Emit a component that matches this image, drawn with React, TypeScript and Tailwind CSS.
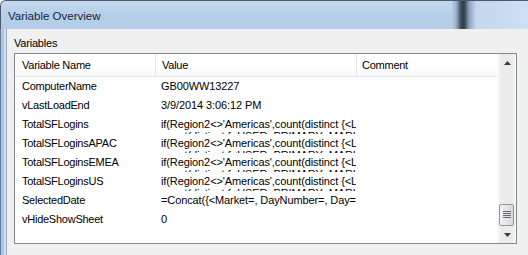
import React from "react";

type Row = { name: string; lines: string[] };

const LONG1 = "if(Region2<>'Americas',count(distinct {<LOGIN_DATE={'>=$(vStart)'}>} USER_ID))";
const LONG2 = "count(distinct {<USER_PRIMARY_MARKET={'$(vRegion)'}>} USER_ID))";

const rows: Row[] = [
  { name: "ComputerName", lines: ["GB00WW13227"] },
  { name: "vLastLoadEnd", lines: ["3/9/2014 3:06:12 PM"] },
  { name: "TotalSFLogins", lines: [LONG1, LONG2] },
  { name: "TotalSFLoginsAPAC", lines: [LONG1, LONG2] },
  { name: "TotalSFLoginsEMEA", lines: [LONG1, LONG2] },
  { name: "TotalSFLoginsUS", lines: [LONG1, LONG2] },
  { name: "SelectedDate", lines: ["=Concat({<Market=, DayNumber=, Day=, Month=>} Date)"] },
  { name: "vHideShowSheet", lines: ["0"] },
];

function Grip() {
  return (
    <svg width="8" height="8" viewBox="0 0 8 8">
      <rect x="0" y="0" width="8" height="1" fill="#5e6a78" />
      <rect x="0" y="2" width="8" height="1" fill="#5e6a78" />
      <rect x="0" y="4" width="8" height="1" fill="#5e6a78" />
      <rect x="0" y="6" width="8" height="1" fill="#5e6a78" />
    </svg>
  );
}

export default function App() {
  return (
    <div className="w-[528px] h-[255px] overflow-hidden bg-[#f0f0f0] flex flex-col font-['Liberation_Sans',Arial,sans-serif] text-black">
      {/* Title bar */}
      <div className="h-[29px] shrink-0 flex rounded-tl-[6px] border-t border-l border-[#4e5866] overflow-hidden">
        <div className="flex-1 flex items-center pl-[7px] bg-[linear-gradient(180deg,#c4d9ef_0%,#b6cfe9_45%,#b3cce7_100%)]">
          <span className="text-[11.5px] leading-[14px] text-[#15233a] pt-[1px]">Variable Overview</span>
        </div>
        <div className="w-[76px] bg-[linear-gradient(90deg,#b3cce6_0px,#9cb4cd_4px,#3c4958_9px,#2e3a47_12px,#8aa2bb_17px,#c3d8ee_24px,#cde0f3_100%)]" />
      </div>
      {/* Body */}
      <div className="flex-1 flex">
        <div className="w-[7px] shrink-0 flex">
          <div className="w-[1px] bg-[#6a7c93]" />
          <div className="w-[3px] bg-[#a9c6e6]" />
          <div className="w-[2px] bg-[#d3e2f2]" />
          <div className="w-[1px] bg-[#a3adb9]" />
        </div>
        <div className="flex-1 pl-[7px] pt-[8px] flex flex-col">
          <div className="h-[13px] text-[11px] leading-[13px] tracking-[-0.2px]">Variables</div>
          <div className="mt-[3px] w-[503px] h-[191px] border border-[#828790] bg-white flex">
            <div className="w-[482px] flex flex-col text-[11px] tracking-[-0.25px]">
              {/* Header */}
              <div className="h-[23px] flex border-b border-[#e5e5e5] bg-[linear-gradient(180deg,#ffffff_0%,#ffffff_60%,#f7f8f9_100%)]">
                <div className="w-[141px] border-r border-[#e3e5e8] pl-[7px] flex items-center leading-[13px]">Variable Name</div>
                <div className="w-[201px] border-r border-[#e3e5e8] pl-[6px] flex items-center leading-[13px]">Value</div>
                <div className="w-[140px] pl-[5px] flex items-center leading-[13px]">Comment</div>
              </div>
              {/* Rows */}
              {rows.map((r) => (
                <div key={r.name} className="h-[19px] flex overflow-hidden">
                  <div className="w-[141px] pl-[7px] pt-[3px] leading-[12px] whitespace-nowrap overflow-hidden">{r.name}</div>
                  <div className="w-[195px] ml-[5px] pt-[3px] leading-[12px] whitespace-nowrap overflow-hidden flex flex-col tracking-[-0.1px]">
                    {r.lines.map((l, i) => (
                      <span key={i}>{l}</span>
                    ))}
                  </div>
                  <div className="w-[141px]" />
                </div>
              ))}
            </div>
            {/* Scrollbar */}
            <div className="w-[19px] flex flex-col bg-[linear-gradient(90deg,#fbfbfb_0px,#f4f4f4_2px,#ebebeb_4px,#ebebeb_16px,#f6f6f6_18px)]">
              <div className="h-[17px] flex items-center justify-center pl-[1px]">
                <svg width="7" height="4" viewBox="0 0 7 4">
                  <polygon points="3.5,0 7,4 0,4" fill="#3c3c3c" />
                </svg>
              </div>
              <div className="flex-1" />
              <div className="h-[22px] mx-[2px] rounded-[2px] border border-[#979797] bg-[linear-gradient(90deg,#f2f2f2_0%,#e6e6e6_50%,#d8d8d8_100%)] flex items-center justify-center">
                <Grip />
              </div>
              <div className="h-[17px] flex items-center justify-center pl-[1px]">
                <svg width="7" height="4" viewBox="0 0 7 4">
                  <polygon points="0,0 7,0 3.5,4" fill="#3c3c3c" />
                </svg>
              </div>
            </div>
          </div>
        </div>
      </div>
    </div>
  );
}
